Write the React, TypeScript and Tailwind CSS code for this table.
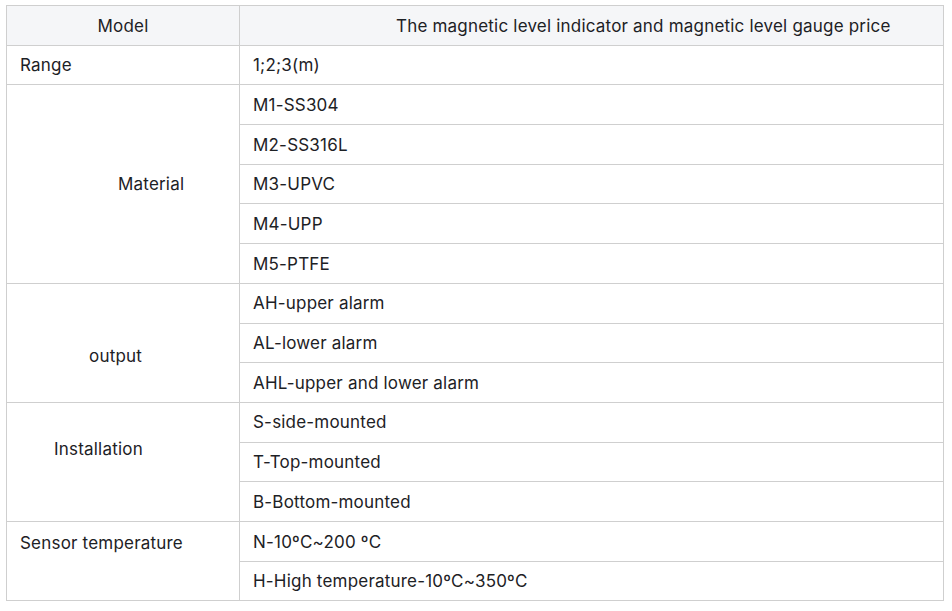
const materials = ["M1-SS304", "M2-SS316L", "M3-UPVC", "M4-UPP", "M5-PTFE"];
const outputs = ["AH-upper alarm", "AL-lower alarm", "AHL-upper and lower alarm"];
const installs = ["S-side-mounted", "T-Top-mounted", "B-Bottom-mounted"];
const temps = ["N-10ºC~200 ºC", "H-High temperature-10ºC~350ºC"];

const cell = "border border-[#cfcfcf] px-[13px] pt-[2px] pb-0";
const row = "h-[39.7px]";

export default function App() {
  return (
    <div
      className="w-[952px] h-[611px] bg-white pt-[5px] pl-[6px] text-[17px] tracking-[0.2px] text-[#1d2125]"
      style={{ fontFamily: "Inter, 'Noto Sans', sans-serif" }}
    >
      <table className="border-collapse w-[938px] table-fixed">
        <colgroup>
          <col className="w-[233px]" />
          <col />
        </colgroup>
        <thead>
          <tr className={row}>
            <th className={`${cell} bg-[#f5f6f8] font-normal text-center`}>Model</th>
            <th className={`${cell} bg-[#f5f6f8] font-normal text-left pl-[156px]`}>
              The magnetic level indicator and magnetic level gauge price
            </th>
          </tr>
        </thead>
        <tbody>
          <tr className={row}>
            <td className={cell}>Range</td>
            <td className={cell}>1;2;3(m)</td>
          </tr>
          {materials.map((m, i) => (
            <tr key={m} className={row}>
              {i === 0 && (
                <td rowSpan={5} className={`${cell} align-middle pl-[111px]`}>
                  Material
                </td>
              )}
              <td className={cell}>{m}</td>
            </tr>
          ))}
          {outputs.map((o, i) => (
            <tr key={o} className={row}>
              {i === 0 && (
                <td rowSpan={3} className={`${cell} align-middle pl-[82px] pt-[28px]`}>
                  output
                </td>
              )}
              <td className={cell}>{o}</td>
            </tr>
          ))}
          {installs.map((s, i) => (
            <tr key={s} className={row}>
              {i === 0 && (
                <td rowSpan={3} className={`${cell} align-middle pl-[47px] pb-[26px]`}>
                  Installation
                </td>
              )}
              <td className={cell}>{s}</td>
            </tr>
          ))}
          {temps.map((t, i) => (
            <tr key={t} className={row}>
              {i === 0 && (
                <td rowSpan={2} className={`${cell} align-top pt-[9px]`}>
                  Sensor temperature
                </td>
              )}
              <td className={cell}>{t}</td>
            </tr>
          ))}
        </tbody>
      </table>
    </div>
  );
}
